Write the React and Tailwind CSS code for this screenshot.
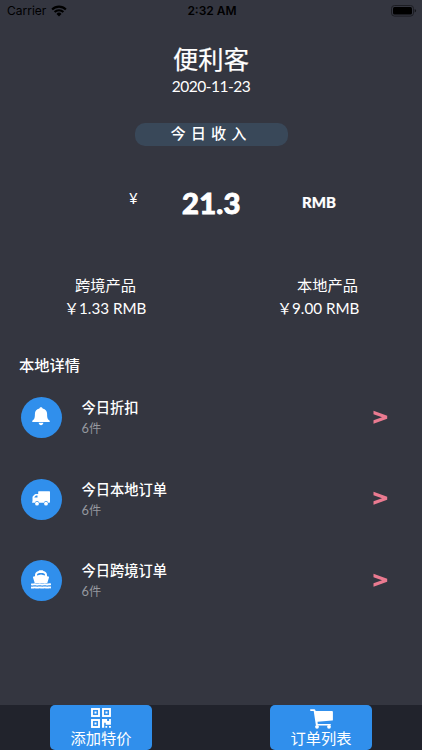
import React from 'react';

function WifiIcon() {
  return (
    <svg width="16" height="12" viewBox="0 0 16 12" className="block">
      <g fill="none" stroke="#000" strokeWidth="2.1">
        <path d="M1.1 4.5a9.8 9.8 0 0 1 13.8 0" />
        <path d="M3.6 7.1a6.2 6.2 0 0 1 8.8 0" />
      </g>
      <path d="M8 11.4 5.5 8.9a3.5 3.5 0 0 1 5 0Z" />
    </svg>
  );
}

function BatteryIcon() {
  return (
    <svg width="26" height="12" viewBox="0 0 26 12" className="block">
      <rect x="0.5" y="0.5" width="22" height="10.6" rx="3" fill="none" stroke="#1c1d23" />
      <rect x="2" y="2" width="19" height="7.6" rx="1.5" />
      <path d="M23.7 4v3.6q1.4-.5 1.4-1.8T23.7 4Z" fill="#15161a" />
    </svg>
  );
}

function BellIcon() {
  return (
    <svg width="18" height="19" viewBox="0 0 18 19" fill="#fff">
      <path d="M9 .2c1 0 1.5.6 1.6 1.4 3.1.7 4.5 2.800 4.500 5.400 0 4 .5 5.300 2.300 6.500q.6.400.4 1-.2.600-.8.600H1q-.6 0-.8-.6-.2-.6.4-1c1.800-1.200 2.300-2.500 2.300-6.500 0-2.600 1.400-4.700 4.500-5.400C7.500.8 8 .2 9 .2Z" />
      <path d="M6.600 15.800h4.800c-.3 1.600-1.200 2.400-2.400 2.400s-2.100-.8-2.400-2.400Z" />
    </svg>
  );
}

function TruckIcon() {
  return (
    <svg width="18" height="15" viewBox="0 0 18 15" fill="#fff">
      <path
        fillRule="evenodd"
        d="M6.800.2h10.600q.6 0 .6.600v10.200q0 .7-.6.700h-1.200a2.200 2.200 0 0 0-4.300 0H7.200a2.200 2.200 0 0 0-4.300 0H.6q-.6 0-.6-.6t.5-.6V6.400q0-.6.400-1.100l1.700-1.900q.4-.5 1-.5h2.600V.8Q6.200.2 6.800.2ZM2.300 6.500h3.200V4.600H4.200q-.3 0-.5.200L2.500 6Z"
      />
      <circle cx="5" cy="12.700" r="1.900" />
      <circle cx="14" cy="12.700" r="1.900" />
    </svg>
  );
}

function ShipIcon() {
  return (
    <svg width="20" height="19" viewBox="0 0 20 19" fill="#fff">
      <path
        fillRule="evenodd"
        d="M7.700 1.100Q7.700.2 8.600.2h2.800q.9 0 .9.900c2.500.5 3.600 1.900 3.700 3.900v1.200l1.500.4q.8.300.4 1.100l-1.600 5.200H3.700L2.100 7.700q-.4-.8.4-1.100L4 6.200V5C4.100 3 5.200 1.600 7.700 1.100ZM6 5.600 10 4.400l4 1.200V5c0-1.500-1.200-2-4-2s-4 .5-4 2Z"
      />
      <g fill="none" stroke="#fff" strokeWidth="1.900">
        <path d="M0 14.400q1.250.3 2.500 0t2.500 0 2.500 0 2.500 0 2.500 0 2.500 0 2.500 0 2.500 0" />
        <path d="M0 17.500q1.250.3 2.500 0t2.500 0 2.500 0 2.500 0 2.500 0 2.500 0 2.500 0 2.500 0" />
      </g>
    </svg>
  );
}

function QrIcon() {
  return (
    <svg width="20" height="20" viewBox="0 0 20 20" fill="#fff">
      <g fill="none" stroke="#fff" strokeWidth="1.9">
        <rect x="1" y="1" width="7" height="7" />
        <rect x="12" y="1" width="7" height="7" />
        <rect x="1" y="12" width="7" height="7" />
      </g>
      <path d="M3.500 3.500h2v2h-2zM14.500 3.500h2v2h-2zM3.500 14.500h2v2h-2z" />
      <path d="M11 11h5.100v2h2v-2h1.800v5.700h-5.200v-1.900h-1.500v5H11zM14.400 18h1.800v1.800h-1.800zM18 18h1.900v1.800H18z" />
    </svg>
  );
}

function CartIcon() {
  return (
    <svg width="23" height="20" viewBox="0 0 23 20" fill="#fff">
      <path d="M.8.300h3.500q.8 0 1 .8l.3 1h16.400q.9 0 .9 1v7.600q0 .8-.8.900L7.500 12.800l.3 2.200h12.300q.9 0 .9.800t-.9.800H6.700q-.8 0-.9-.8L3.700 1.900H.8q-.8 0-.8-.8T.8.300Z" />
      <circle cx="7" cy="17.800" r="1.900" />
      <circle cx="19" cy="17.800" r="1.900" />
    </svg>
  );
}

const sans = "font-['Lato','Noto_Sans_CJK_SC',sans-serif]";

const rows = [
  { title: '今日折扣', count: '6', Icon: BellIcon },
  { title: '今日本地订单', count: '6', Icon: TruckIcon },
  { title: '今日跨境订单', count: '6', Icon: ShipIcon },
];

function DetailRow({ title, count, Icon }) {
  return (
    <div className="flex h-[81.500px] items-start pr-[34px] pl-[20.500px]">
      <div className="flex size-[41px] shrink-0 items-center justify-center rounded-full bg-[#308fec] pr-[1px] pb-[2px]">
        <Icon />
      </div>
      <div className="ml-5 flex-1">
        <div className="h-[21px] text-[14.250px] leading-[21px] font-medium text-white">{title}</div>
        <div className="flex h-[21px] text-[12.200px] leading-[21px] text-[#96989f]">
          <span className="text-[12.800px]">{count}</span>
          <span>件</span>
        </div>
      </div>
      <svg width="15" height="15" viewBox="0 0 15 15" className="mt-[12.500px]" fill="#ea7a90">
        <path d="M.5.700 14.200 5.700v3L.5 13.700v-3.500L9 7.200.5 4.200Z" />
      </svg>
    </div>
  );
}

function Price({ value }) {
  return (
    <div className="flex h-[23px] text-[15.200px] leading-[23px] whitespace-nowrap">
      <span className="-ml-[2px] w-[15px]">￥</span>
      <span>{value}</span>
    </div>
  );
}

export default function App() {
  return (
    <div className={`flex h-[750px] w-[422px] flex-col overflow-hidden bg-[#343640] ${sans}`}>
      <header className="flex h-[22px] items-center justify-between pr-[5px] pl-[7px] font-['Inter',sans-serif] text-[12px] text-black">
        <div className="flex w-[170px] items-center gap-[5px]">
          <span>Carrier</span>
          <WifiIcon />
        </div>
        <div className="w-[72px] text-center text-[12px] font-semibold whitespace-nowrap">2:32 AM</div>
        <div className="flex w-[170px] justify-end">
          <BatteryIcon />
        </div>
      </header>

      <section className="flex flex-col items-center text-white">
        <h1 className="mt-[18px] h-[38px] text-[25.300px] leading-[38px] [-webkit-text-stroke:0.2px_white]">便利客</h1>
        <div className="h-[18px] text-[15.500px] leading-[17px] tracking-[-0.500px]">2020-11-23</div>
        <div className="mt-[26.500px] flex h-[23px] w-[153px] items-start justify-center rounded-[10px] bg-[#394859] text-[15.200px] leading-[21px] font-medium tracking-[5.100px]">
          今日收入
        </div>
      </section>

      <section className="mt-[36.500px] flex h-10 items-center text-white">
        <div className="ml-[129px] w-[53px] pb-[7px] text-[15px]">¥</div>
        <div className="w-[120px] pt-[1px] text-[29.200px] leading-10 font-black tracking-[0.200px] [-webkit-text-stroke:0.9px_white]">21.3</div>
        <div className="text-[15px] font-black [-webkit-text-stroke:0.2px_white]">RMB</div>
      </section>

      <section className="mt-[52px] flex text-white">
        <div className="w-[213px] pl-[66px]">
          <div className="h-[23px] pl-[9px] text-[15.250px] leading-[23px]">跨境产品</div>
          <Price value="1.33 RMB" />
        </div>
        <div className="pl-[66px]">
          <div className="h-[23px] pl-[18px] text-[15.250px] leading-[23px]">本地产品</div>
          <Price value="9.00 RMB" />
        </div>
      </section>

      <h2 className="mt-[34px] h-[23px] pl-[19px] text-[15.250px] leading-[23px] font-medium text-white">本地详情</h2>
      <main className="mt-5 flex-1">
        {rows.map((row) => (
          <DetailRow key={row.title} {...row} />
        ))}
      </main>

      <nav className="flex h-[45px] shrink-0 justify-between bg-[#21232c] px-[50px] text-[15.250px] text-white">
        <button className="flex h-[45px] w-[102px] flex-col items-center rounded-[5px] bg-[#308fec] pt-[3px]">
          <QrIcon />
          <span className="h-5 leading-5">添加特价</span>
        </button>
        <button className="flex h-[45px] w-[102px] flex-col items-center rounded-[5px] bg-[#308fec] pt-[4px]">
          <CartIcon />
          <span className="h-5 leading-[18px]">订单列表</span>
        </button>
      </nav>
    </div>
  );
}
